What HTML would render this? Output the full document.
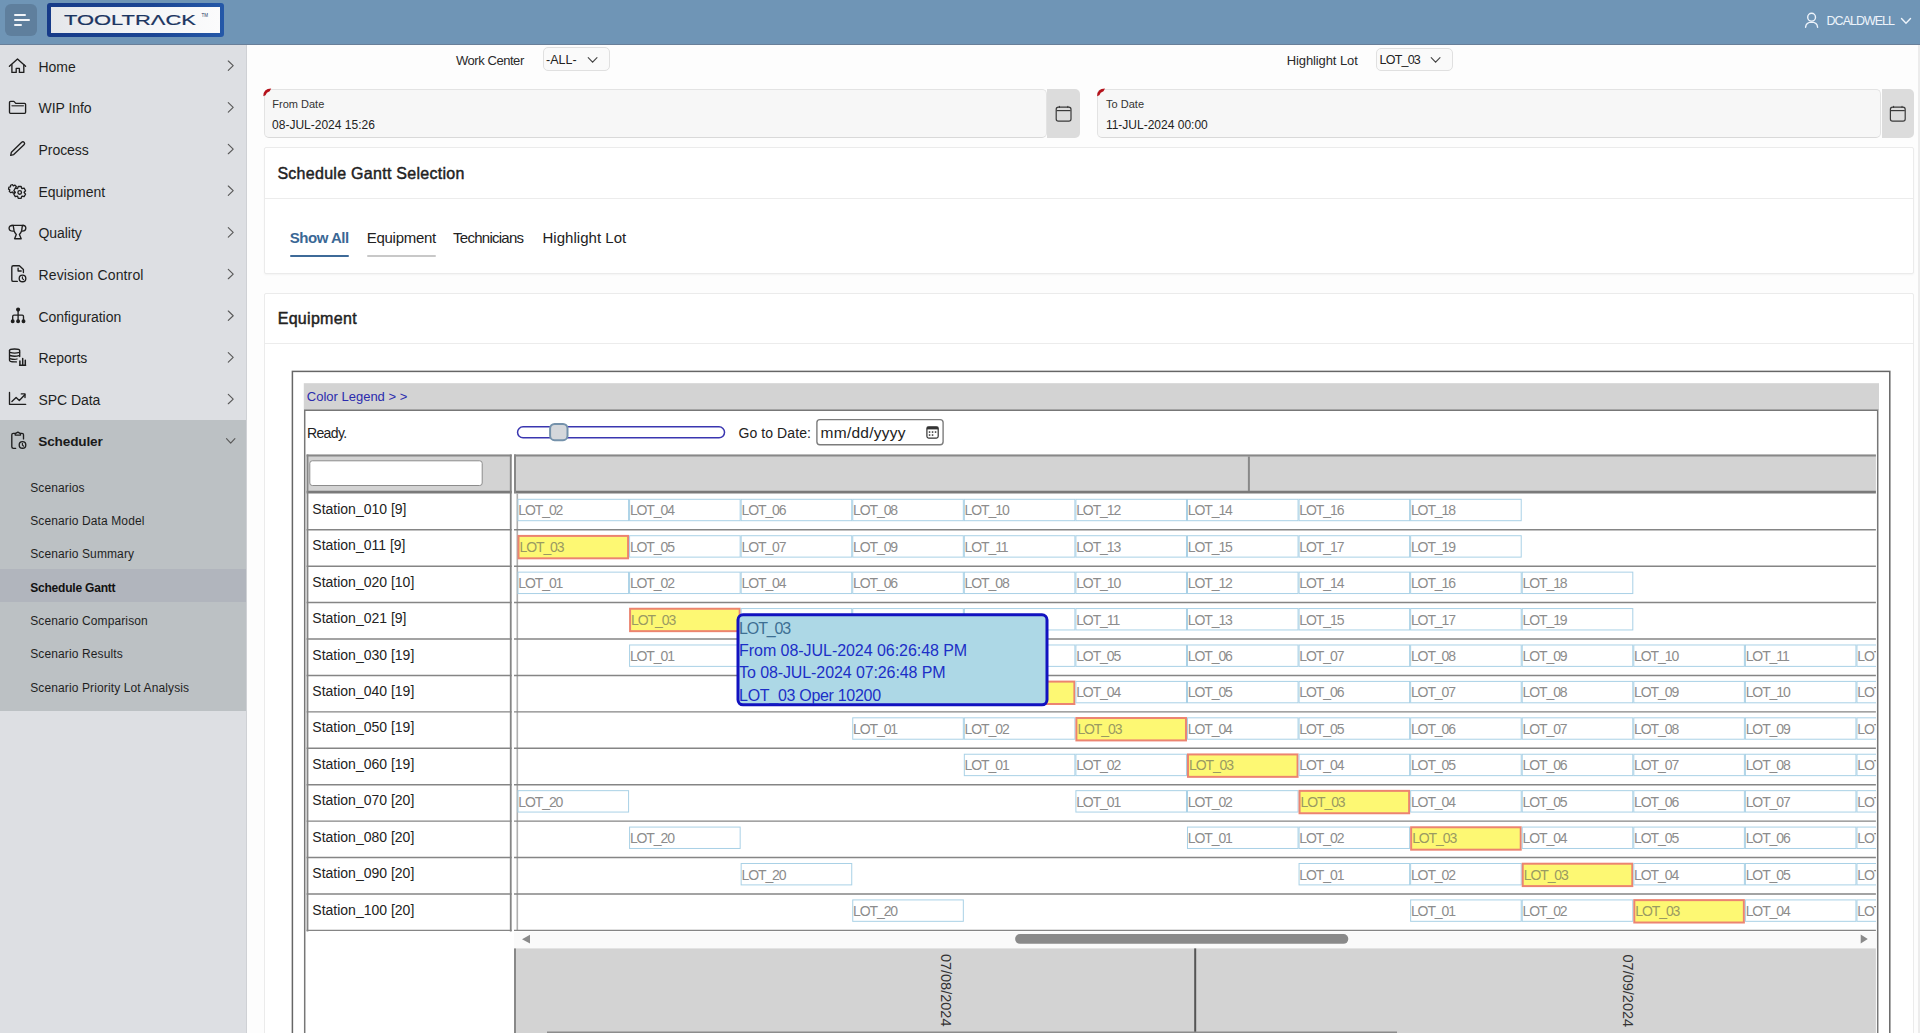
<!DOCTYPE html><html><head><meta charset="utf-8"><style>
*{box-sizing:border-box;margin:0;padding:0}
html,body{width:1920px;height:1033px;overflow:hidden;background:#fdfdfd;font-family:"Liberation Sans",sans-serif;color:#222}
.a{position:absolute;white-space:nowrap}
svg{position:absolute;overflow:visible}
</style></head><body>
<div class="a" style="left:0px;top:0px;width:1920px;height:45px;background:#6f95b6"></div>
<div class="a" style="left:0px;top:44px;width:1920px;height:1px;background:#687f99"></div>
<div class="a" style="left:5.2px;top:3.6px;width:32.3px;height:32px;background:#5f7f9d;border-radius:6px"></div>
<div class="a" style="left:13.5px;top:14.2px;width:12.2px;height:1.7px;background:#f2f5f9;border-radius:1px"></div>
<div class="a" style="left:13.5px;top:19.2px;width:16.5px;height:1.7px;background:#f2f5f9;border-radius:1px"></div>
<div class="a" style="left:13.5px;top:24.2px;width:8.2px;height:1.7px;background:#f2f5f9;border-radius:1px"></div>
<div class="a" style="left:47px;top:3px;width:177px;height:34px;background:linear-gradient(90deg,#163a88,#1b4594 60%,#2458a8);border-radius:3px"></div>
<div class="a" style="left:51px;top:7px;width:169px;height:26px;background:linear-gradient(90deg,#e4e6ea,#f4f5f7 50%,#fbfbfc)"></div>
<div class="a " style="left:63.5px;top:12.84px;font-size:14.6px;line-height:14.6px;color:#1c3561;letter-spacing:0px;transform:scaleX(1.5);transform-origin:0 0;-webkit-text-stroke:0.2px #1c3561">TOOLTR&#923;CK</div>
<div class="a " style="left:201.5px;top:13.69px;font-size:4.5px;line-height:4.5px;color:#1c3561">TM</div>
<svg style="left:0;top:0" width="1920" height="44"><g fill="none" stroke="#eef4fb" stroke-width="1.4" stroke-linecap="round"><circle cx="1811.6" cy="17.2" r="3.9"/><path d="M1805.6 27.2 Q1806 22.2 1811.6 22.1 Q1817.2 22.2 1817.6 27.2"/><path d="M1901.5 18.4 L1906 23.2 L1910.5 18.4"/></g></svg><div class="a " style="left:1826.6px;top:14.82px;font-size:12.5px;line-height:12.5px;color:#eef4fb;letter-spacing:-1.0px">DCALDWELL</div>
<div class="a" style="left:0px;top:45px;width:247px;height:988px;background:#dddfe3"></div>
<div class="a" style="left:246px;top:45px;width:1px;height:988px;background:#cfd1d5"></div>
<div class="a" style="left:0px;top:420px;width:246px;height:290.6px;background:#bcc1c4"></div>
<div class="a" style="left:0px;top:569.4px;width:246px;height:32.4px;background:#b1b5bd"></div>
<div class="a " style="left:38.5px;top:59.55px;font-size:14px;line-height:14px;color:#1f1f1f;letter-spacing:-0.05px">Home</div>
<div class="a " style="left:38.5px;top:101.22px;font-size:14px;line-height:14px;color:#1f1f1f;letter-spacing:-0.05px">WIP Info</div>
<div class="a " style="left:38.5px;top:142.89px;font-size:14px;line-height:14px;color:#1f1f1f;letter-spacing:-0.05px">Process</div>
<div class="a " style="left:38.5px;top:184.56px;font-size:14px;line-height:14px;color:#1f1f1f;letter-spacing:-0.05px">Equipment</div>
<div class="a " style="left:38.5px;top:226.23px;font-size:14px;line-height:14px;color:#1f1f1f;letter-spacing:-0.05px">Quality</div>
<div class="a " style="left:38.5px;top:267.90px;font-size:14px;line-height:14px;color:#1f1f1f;letter-spacing:0.15px">Revision Control</div>
<div class="a " style="left:38.5px;top:309.57px;font-size:14px;line-height:14px;color:#1f1f1f;letter-spacing:-0.05px">Configuration</div>
<div class="a " style="left:38.5px;top:351.24px;font-size:14px;line-height:14px;color:#1f1f1f;letter-spacing:-0.05px">Reports</div>
<div class="a " style="left:38.5px;top:392.91px;font-size:14px;line-height:14px;color:#1f1f1f;letter-spacing:-0.05px">SPC Data</div>
<div class="a " style="left:38.3px;top:435.09px;font-size:13.6px;line-height:13.6px;color:#1a1a1a;font-weight:bold;letter-spacing:-0.15px">Scheduler</div>
<svg style="left:0;top:0" width="247" height="720"><g fill="none" stroke="#5a5a5a" stroke-width="1.15" stroke-linecap="round" stroke-linejoin="round"><path d="M228.3 61.00 L233.2 65.70 L228.3 70.40"/><path d="M228.3 102.67 L233.2 107.37 L228.3 112.07"/><path d="M228.3 144.34 L233.2 149.04 L228.3 153.74"/><path d="M228.3 186.01 L233.2 190.71 L228.3 195.41"/><path d="M228.3 227.68 L233.2 232.38 L228.3 237.08"/><path d="M228.3 269.35 L233.2 274.05 L228.3 278.75"/><path d="M228.3 311.02 L233.2 315.72 L228.3 320.42"/><path d="M228.3 352.69 L233.2 357.39 L228.3 362.09"/><path d="M228.3 394.36 L233.2 399.06 L228.3 403.76"/><path d="M226.5 438.7 L230.7 443.2 L234.9 438.7"/></g></svg><div class="a " style="left:30.2px;top:481.74px;font-size:12px;line-height:12px;color:#1f1f1f;letter-spacing:0.12px">Scenarios</div>
<div class="a " style="left:30.2px;top:515.07px;font-size:12px;line-height:12px;color:#1f1f1f;letter-spacing:0.12px">Scenario Data Model</div>
<div class="a " style="left:30.2px;top:548.40px;font-size:12px;line-height:12px;color:#1f1f1f;letter-spacing:0.12px">Scenario Summary</div>
<div class="a " style="left:30.2px;top:581.73px;font-size:12px;line-height:12px;color:#111;font-weight:bold;letter-spacing:-0.2px">Schedule Gantt</div>
<div class="a " style="left:30.2px;top:615.06px;font-size:12px;line-height:12px;color:#1f1f1f;letter-spacing:0.12px">Scenario Comparison</div>
<div class="a " style="left:30.2px;top:648.39px;font-size:12px;line-height:12px;color:#1f1f1f;letter-spacing:0.12px">Scenario Results</div>
<div class="a " style="left:30.2px;top:681.72px;font-size:12px;line-height:12px;color:#1f1f1f;letter-spacing:0.12px">Scenario Priority Lot Analysis</div>
<div class="a" style="left:1918px;top:45px;width:2px;height:988px;background:#ececec"></div>
<div class="a " style="left:456px;top:53.80px;font-size:13px;line-height:13px;color:#2a2a2a;letter-spacing:-0.45px">Work Center</div>
<div class="a" style="left:542.5px;top:47.3px;width:67px;height:24px;background:#fafafa;border:1px solid #e0e0e0;border-radius:5px"></div>
<div class="a " style="left:546px;top:54.32px;font-size:12.5px;line-height:12.5px;color:#222">-ALL-</div>
<div class="a " style="left:1286.7px;top:53.80px;font-size:13px;line-height:13px;color:#2a2a2a;letter-spacing:-0.1px">Highlight Lot</div>
<div class="a" style="left:1375.7px;top:47.5px;width:77px;height:23.6px;background:#fafafa;border:1px solid #e0e0e0;border-radius:5px"></div>
<div class="a " style="left:1379.6px;top:54.32px;font-size:12.5px;line-height:12.5px;color:#222;letter-spacing:-0.8px">LOT_03</div>
<svg style="left:0;top:0" width="1920" height="80"><g fill="none" stroke="#444" stroke-width="1.1" stroke-linecap="round"><path d="M588.2 57.6 L592.6 62.2 L597 57.6"/><path d="M1431.2 57.6 L1435.6 62.2 L1440 57.6"/></g></svg><div class="a" style="left:263.5px;top:88.8px;width:783px;height:49.5px;background:#f7f7f7;border:1px solid #e3e3e3;border-bottom-color:#d9d9d9;border-radius:5px"></div>
<div class="a" style="left:1047.3px;top:88.8px;width:32.6px;height:49.5px;background:#dcdcdc;border-radius:0 5px 5px 0"></div>
<svg style="left:0;top:0" width="1920" height="150"><g fill="none" stroke="#3a3a3a" stroke-width="1.2"><rect x="1056.2" y="107.2" width="14.8" height="14" rx="2.2"/><path d="M1056.6 110.6 H1070.6" /><path d="M1059.4 105.9 V108 M1067.8 105.9 V108" stroke-width="1"/></g><path d="M263.30 96.3 Q263.30 88.6 271.20 88.6 L269.70 91.3 Q266.30 92.4 265.50 95.3 Z" fill="#b5121b"/></svg><div class="a " style="left:272.3px;top:99.49px;font-size:11px;line-height:11px;color:#333">From Date</div>
<div class="a " style="left:272.1px;top:118.84px;font-size:12px;line-height:12px;color:#222">08-JUL-2024 15:26</div>
<div class="a" style="left:1097.3px;top:88.8px;width:783.4px;height:49.5px;background:#f7f7f7;border:1px solid #e3e3e3;border-bottom-color:#d9d9d9;border-radius:5px"></div>
<div class="a" style="left:1881.4999999999998px;top:88.8px;width:32.6px;height:49.5px;background:#dcdcdc;border-radius:0 5px 5px 0"></div>
<svg style="left:0;top:0" width="1920" height="150"><g fill="none" stroke="#3a3a3a" stroke-width="1.2"><rect x="1890.4" y="107.2" width="14.8" height="14" rx="2.2"/><path d="M1890.8 110.6 H1904.8" /><path d="M1893.6 105.9 V108 M1902.0 105.9 V108" stroke-width="1"/></g><path d="M1097.10 96.3 Q1097.10 88.6 1105.00 88.6 L1103.50 91.3 Q1100.10 92.4 1099.30 95.3 Z" fill="#b5121b"/></svg><div class="a " style="left:1106.1px;top:99.49px;font-size:11px;line-height:11px;color:#333">To Date</div>
<div class="a " style="left:1105.8999999999999px;top:118.84px;font-size:12px;line-height:12px;color:#222">11-JUL-2024 00:00</div>
<div class="a" style="left:264px;top:147.3px;width:1650px;height:127px;background:#fff;border:1px solid #ebebeb;border-radius:2px;box-shadow:0 1px 2px rgba(0,0,0,.04)"></div>
<div class="a" style="left:265px;top:198px;width:1648px;height:1px;background:#ececec"></div>
<div class="a " style="left:277.4px;top:165.96px;font-size:16px;line-height:16px;color:#222;-webkit-text-stroke:0.45px #222;letter-spacing:0.28px">Schedule Gantt Selection</div>
<div class="a " style="left:289.8px;top:229.70px;font-size:15px;line-height:15px;color:#3a6795;font-weight:bold;letter-spacing:-0.5px">Show All</div>
<div class="a" style="left:289.8px;top:254.6px;width:59.2px;height:2.6px;background:#3e6a98;border-radius:1px"></div>
<div class="a " style="left:366.7px;top:229.70px;font-size:15px;line-height:15px;color:#222;letter-spacing:-0.27px">Equipment</div>
<div class="a" style="left:366.7px;top:254.6px;width:69.3px;height:2.6px;background:#c8c8c8;border-radius:1px"></div>
<div class="a " style="left:453px;top:229.70px;font-size:15px;line-height:15px;color:#222;letter-spacing:-0.73px">Technicians</div>
<div class="a " style="left:542.5px;top:229.70px;font-size:15px;line-height:15px;color:#222;letter-spacing:0.03px">Highlight Lot</div>
<div class="a" style="left:263.7px;top:292.6px;width:1650.3px;height:760px;background:#fff;border:1px solid #ebebeb;border-radius:2px"></div>
<div class="a" style="left:264.7px;top:342.5px;width:1648px;height:1px;background:#ececec"></div>
<div class="a " style="left:277.7px;top:311.06px;font-size:16px;line-height:16px;color:#222;-webkit-text-stroke:0.45px #222;letter-spacing:0.3px">Equipment</div>
<svg style="left:0;top:0;font-family:'Liberation Sans',sans-serif" width="1920" height="1033"><rect x="292.4" y="371.4" width="1597.4" height="720" fill="#fff" stroke="#666" stroke-width="1.5"/><rect x="303.8" y="383.2" width="1575.2" height="26.8" fill="#d3d3d3"/><path d="M304.7 1040 V410.3 H1877.7 V1040" fill="none" stroke="#777" stroke-width="1.5"/><text x="306.8" y="400.9" font-size="13" fill="#2b2bae">Color Legend &gt; &gt;</text><text x="306.9" y="437.8" font-size="14" fill="#222" letter-spacing="-0.6">Ready.</text><rect x="517.55" y="426.85" width="207" height="11" rx="5.5" fill="#fff" stroke="#3a36b0" stroke-width="1.5"/><rect x="550.1" y="424" width="17.4" height="16.2" rx="4.5" fill="#d4d7db" stroke="#7592ab" stroke-width="2"/><text x="738.4" y="438" font-size="14" fill="#222" letter-spacing="0.1">Go to Date:</text><rect x="816.9" y="419.6" width="126.2" height="25.2" rx="3" fill="#fff" stroke="#7c7c7c" stroke-width="1.4"/><text x="820.6" y="437.9" font-size="15.5" fill="#222" letter-spacing="0.25">mm/dd/yyyy</text><rect x="926.9" y="426.8" width="11.3" height="11.3" rx="1.8" fill="none" stroke="#333" stroke-width="1.2"/><rect x="926.9" y="426.8" width="11.3" height="2.6" fill="#333"/><rect x="928.8" y="431.3" width="1.5" height="1.5" fill="#333"/><rect x="931.8" y="431.3" width="1.5" height="1.5" fill="#333"/><rect x="934.8" y="431.3" width="1.5" height="1.5" fill="#333"/><rect x="928.8" y="434.3" width="1.5" height="1.5" fill="#333"/><rect x="931.8" y="434.3" width="1.5" height="1.5" fill="#333"/><rect x="306.6" y="454.6" width="205.1" height="38" fill="#d3d3d3"/><rect x="309.8" y="460.8" width="172.4" height="24.7" rx="2.5" fill="#fff" stroke="#8c8c8c" stroke-width="1"/><rect x="514" y="454.6" width="1361.9" height="38" fill="#d3d3d3"/><path d="M306.6 455.6 H511.7 M514 455.6 H1875.9" stroke="#888" stroke-width="2"/><path d="M306.6 492.15 H511.7 M514 492.15 H1875.9" stroke="#7a7a7a" stroke-width="2.7"/><path d="M1248.9 456.5 V491" stroke="#888" stroke-width="2"/><path d="M515 454.6 V493" stroke="#888" stroke-width="2"/><path d="M517.3 493.5 V931" stroke="#b0b0b0" stroke-width="1.6"/><path d="M307.5 454.6 V931.6 M510.75 454.6 V931.6" stroke="#858585" stroke-width="1.8"/><path d="M306.6 529.75 H511.7 M514 529.75 H1875.9" stroke="#858585" stroke-width="1.45"/><path d="M306.6 566.17 H511.7 M514 566.17 H1875.9" stroke="#858585" stroke-width="1.45"/><path d="M306.6 602.59 H511.7 M514 602.59 H1875.9" stroke="#858585" stroke-width="1.45"/><path d="M306.6 639.01 H511.7 M514 639.01 H1875.9" stroke="#858585" stroke-width="1.45"/><path d="M306.6 675.43 H511.7 M514 675.43 H1875.9" stroke="#858585" stroke-width="1.45"/><path d="M306.6 711.85 H511.7 M514 711.85 H1875.9" stroke="#858585" stroke-width="1.45"/><path d="M306.6 748.27 H511.7 M514 748.27 H1875.9" stroke="#858585" stroke-width="1.45"/><path d="M306.6 784.69 H511.7 M514 784.69 H1875.9" stroke="#858585" stroke-width="1.45"/><path d="M306.6 821.11 H511.7 M514 821.11 H1875.9" stroke="#858585" stroke-width="1.45"/><path d="M306.6 857.53 H511.7 M514 857.53 H1875.9" stroke="#858585" stroke-width="1.45"/><path d="M306.6 893.95 H511.7 M514 893.95 H1875.9" stroke="#858585" stroke-width="1.45"/><path d="M306.6 930.37 H511.7 M514 930.37 H1875.9" stroke="#858585" stroke-width="1.45"/><text x="312.3" y="513.90" font-size="14" fill="#222">Station_010 [9]</text><text x="312.3" y="550.32" font-size="14" fill="#222">Station_011 [9]</text><text x="312.3" y="586.74" font-size="14" fill="#222">Station_020 [10]</text><text x="312.3" y="623.16" font-size="14" fill="#222">Station_021 [9]</text><text x="312.3" y="659.58" font-size="14" fill="#222">Station_030 [19]</text><text x="312.3" y="696.00" font-size="14" fill="#222">Station_040 [19]</text><text x="312.3" y="732.42" font-size="14" fill="#222">Station_050 [19]</text><text x="312.3" y="768.84" font-size="14" fill="#222">Station_060 [19]</text><text x="312.3" y="805.26" font-size="14" fill="#222">Station_070 [20]</text><text x="312.3" y="841.68" font-size="14" fill="#222">Station_080 [20]</text><text x="312.3" y="878.10" font-size="14" fill="#222">Station_090 [20]</text><text x="312.3" y="914.52" font-size="14" fill="#222">Station_100 [20]</text><defs><clipPath id="cp"><rect x="514" y="454" width="1361.9" height="478"/></clipPath></defs><g clip-path="url(#cp)"><rect x="518.00" y="499.30" width="110.58" height="21.4" fill="#fff" stroke="#a9d1e6" stroke-width="1"/><text x="518.30" y="515.30" font-size="14" fill="#8c8c8c" letter-spacing="-1.1">LOT_02</text><rect x="629.58" y="499.30" width="110.58" height="21.4" fill="#fff" stroke="#a9d1e6" stroke-width="1"/><text x="629.88" y="515.30" font-size="14" fill="#8c8c8c" letter-spacing="-1.1">LOT_04</text><rect x="741.16" y="499.30" width="110.58" height="21.4" fill="#fff" stroke="#a9d1e6" stroke-width="1"/><text x="741.46" y="515.30" font-size="14" fill="#8c8c8c" letter-spacing="-1.1">LOT_06</text><rect x="852.74" y="499.30" width="110.58" height="21.4" fill="#fff" stroke="#a9d1e6" stroke-width="1"/><text x="853.04" y="515.30" font-size="14" fill="#8c8c8c" letter-spacing="-1.1">LOT_08</text><rect x="964.32" y="499.30" width="110.58" height="21.4" fill="#fff" stroke="#a9d1e6" stroke-width="1"/><text x="964.62" y="515.30" font-size="14" fill="#8c8c8c" letter-spacing="-1.1">LOT_10</text><rect x="1075.90" y="499.30" width="110.58" height="21.4" fill="#fff" stroke="#a9d1e6" stroke-width="1"/><text x="1076.20" y="515.30" font-size="14" fill="#8c8c8c" letter-spacing="-1.1">LOT_12</text><rect x="1187.48" y="499.30" width="110.58" height="21.4" fill="#fff" stroke="#a9d1e6" stroke-width="1"/><text x="1187.78" y="515.30" font-size="14" fill="#8c8c8c" letter-spacing="-1.1">LOT_14</text><rect x="1299.06" y="499.30" width="110.58" height="21.4" fill="#fff" stroke="#a9d1e6" stroke-width="1"/><text x="1299.36" y="515.30" font-size="14" fill="#8c8c8c" letter-spacing="-1.1">LOT_16</text><rect x="1410.64" y="499.30" width="110.58" height="21.4" fill="#fff" stroke="#a9d1e6" stroke-width="1"/><text x="1410.94" y="515.30" font-size="14" fill="#8c8c8c" letter-spacing="-1.1">LOT_18</text><rect x="518.50" y="535.92" width="109.58" height="22.4" fill="#fdf873" stroke="#ec8470" stroke-width="2"/><text x="519.50" y="551.72" font-size="14" fill="#9a9a62" letter-spacing="-1.1">LOT_03</text><rect x="629.58" y="535.72" width="110.58" height="21.4" fill="#fff" stroke="#a9d1e6" stroke-width="1"/><text x="629.88" y="551.72" font-size="14" fill="#8c8c8c" letter-spacing="-1.1">LOT_05</text><rect x="741.16" y="535.72" width="110.58" height="21.4" fill="#fff" stroke="#a9d1e6" stroke-width="1"/><text x="741.46" y="551.72" font-size="14" fill="#8c8c8c" letter-spacing="-1.1">LOT_07</text><rect x="852.74" y="535.72" width="110.58" height="21.4" fill="#fff" stroke="#a9d1e6" stroke-width="1"/><text x="853.04" y="551.72" font-size="14" fill="#8c8c8c" letter-spacing="-1.1">LOT_09</text><rect x="964.32" y="535.72" width="110.58" height="21.4" fill="#fff" stroke="#a9d1e6" stroke-width="1"/><text x="964.62" y="551.72" font-size="14" fill="#8c8c8c" letter-spacing="-1.1">LOT_11</text><rect x="1075.90" y="535.72" width="110.58" height="21.4" fill="#fff" stroke="#a9d1e6" stroke-width="1"/><text x="1076.20" y="551.72" font-size="14" fill="#8c8c8c" letter-spacing="-1.1">LOT_13</text><rect x="1187.48" y="535.72" width="110.58" height="21.4" fill="#fff" stroke="#a9d1e6" stroke-width="1"/><text x="1187.78" y="551.72" font-size="14" fill="#8c8c8c" letter-spacing="-1.1">LOT_15</text><rect x="1299.06" y="535.72" width="110.58" height="21.4" fill="#fff" stroke="#a9d1e6" stroke-width="1"/><text x="1299.36" y="551.72" font-size="14" fill="#8c8c8c" letter-spacing="-1.1">LOT_17</text><rect x="1410.64" y="535.72" width="110.58" height="21.4" fill="#fff" stroke="#a9d1e6" stroke-width="1"/><text x="1410.94" y="551.72" font-size="14" fill="#8c8c8c" letter-spacing="-1.1">LOT_19</text><rect x="518.00" y="572.14" width="110.58" height="21.4" fill="#fff" stroke="#a9d1e6" stroke-width="1"/><text x="518.30" y="588.14" font-size="14" fill="#8c8c8c" letter-spacing="-1.1">LOT_01</text><rect x="629.58" y="572.14" width="110.58" height="21.4" fill="#fff" stroke="#a9d1e6" stroke-width="1"/><text x="629.88" y="588.14" font-size="14" fill="#8c8c8c" letter-spacing="-1.1">LOT_02</text><rect x="741.16" y="572.14" width="110.58" height="21.4" fill="#fff" stroke="#a9d1e6" stroke-width="1"/><text x="741.46" y="588.14" font-size="14" fill="#8c8c8c" letter-spacing="-1.1">LOT_04</text><rect x="852.74" y="572.14" width="110.58" height="21.4" fill="#fff" stroke="#a9d1e6" stroke-width="1"/><text x="853.04" y="588.14" font-size="14" fill="#8c8c8c" letter-spacing="-1.1">LOT_06</text><rect x="964.32" y="572.14" width="110.58" height="21.4" fill="#fff" stroke="#a9d1e6" stroke-width="1"/><text x="964.62" y="588.14" font-size="14" fill="#8c8c8c" letter-spacing="-1.1">LOT_08</text><rect x="1075.90" y="572.14" width="110.58" height="21.4" fill="#fff" stroke="#a9d1e6" stroke-width="1"/><text x="1076.20" y="588.14" font-size="14" fill="#8c8c8c" letter-spacing="-1.1">LOT_10</text><rect x="1187.48" y="572.14" width="110.58" height="21.4" fill="#fff" stroke="#a9d1e6" stroke-width="1"/><text x="1187.78" y="588.14" font-size="14" fill="#8c8c8c" letter-spacing="-1.1">LOT_12</text><rect x="1299.06" y="572.14" width="110.58" height="21.4" fill="#fff" stroke="#a9d1e6" stroke-width="1"/><text x="1299.36" y="588.14" font-size="14" fill="#8c8c8c" letter-spacing="-1.1">LOT_14</text><rect x="1410.64" y="572.14" width="110.58" height="21.4" fill="#fff" stroke="#a9d1e6" stroke-width="1"/><text x="1410.94" y="588.14" font-size="14" fill="#8c8c8c" letter-spacing="-1.1">LOT_16</text><rect x="1522.22" y="572.14" width="110.58" height="21.4" fill="#fff" stroke="#a9d1e6" stroke-width="1"/><text x="1522.52" y="588.14" font-size="14" fill="#8c8c8c" letter-spacing="-1.1">LOT_18</text><rect x="630.08" y="608.76" width="109.58" height="22.4" fill="#fdf873" stroke="#ec8470" stroke-width="2"/><text x="631.08" y="624.56" font-size="14" fill="#9a9a62" letter-spacing="-1.1">LOT_03</text><rect x="741.16" y="608.56" width="110.58" height="21.4" fill="#fff" stroke="#a9d1e6" stroke-width="1"/><text x="741.46" y="624.56" font-size="14" fill="#8c8c8c" letter-spacing="-1.1">LOT_05</text><rect x="852.74" y="608.56" width="110.58" height="21.4" fill="#fff" stroke="#a9d1e6" stroke-width="1"/><text x="853.04" y="624.56" font-size="14" fill="#8c8c8c" letter-spacing="-1.1">LOT_07</text><rect x="964.32" y="608.56" width="110.58" height="21.4" fill="#fff" stroke="#a9d1e6" stroke-width="1"/><text x="964.62" y="624.56" font-size="14" fill="#8c8c8c" letter-spacing="-1.1">LOT_09</text><rect x="1075.90" y="608.56" width="110.58" height="21.4" fill="#fff" stroke="#a9d1e6" stroke-width="1"/><text x="1076.20" y="624.56" font-size="14" fill="#8c8c8c" letter-spacing="-1.1">LOT_11</text><rect x="1187.48" y="608.56" width="110.58" height="21.4" fill="#fff" stroke="#a9d1e6" stroke-width="1"/><text x="1187.78" y="624.56" font-size="14" fill="#8c8c8c" letter-spacing="-1.1">LOT_13</text><rect x="1299.06" y="608.56" width="110.58" height="21.4" fill="#fff" stroke="#a9d1e6" stroke-width="1"/><text x="1299.36" y="624.56" font-size="14" fill="#8c8c8c" letter-spacing="-1.1">LOT_15</text><rect x="1410.64" y="608.56" width="110.58" height="21.4" fill="#fff" stroke="#a9d1e6" stroke-width="1"/><text x="1410.94" y="624.56" font-size="14" fill="#8c8c8c" letter-spacing="-1.1">LOT_17</text><rect x="1522.22" y="608.56" width="110.58" height="21.4" fill="#fff" stroke="#a9d1e6" stroke-width="1"/><text x="1522.52" y="624.56" font-size="14" fill="#8c8c8c" letter-spacing="-1.1">LOT_19</text><rect x="629.58" y="644.98" width="110.58" height="21.4" fill="#fff" stroke="#a9d1e6" stroke-width="1"/><text x="629.88" y="660.98" font-size="14" fill="#8c8c8c" letter-spacing="-1.1">LOT_01</text><rect x="741.16" y="644.98" width="110.58" height="21.4" fill="#fff" stroke="#a9d1e6" stroke-width="1"/><text x="741.46" y="660.98" font-size="14" fill="#8c8c8c" letter-spacing="-1.1">LOT_02</text><rect x="853.24" y="645.18" width="109.58" height="22.4" fill="#fdf873" stroke="#ec8470" stroke-width="2"/><text x="854.24" y="660.98" font-size="14" fill="#9a9a62" letter-spacing="-1.1">LOT_03</text><rect x="964.32" y="644.98" width="110.58" height="21.4" fill="#fff" stroke="#a9d1e6" stroke-width="1"/><text x="964.62" y="660.98" font-size="14" fill="#8c8c8c" letter-spacing="-1.1">LOT_04</text><rect x="1075.90" y="644.98" width="110.58" height="21.4" fill="#fff" stroke="#a9d1e6" stroke-width="1"/><text x="1076.20" y="660.98" font-size="14" fill="#8c8c8c" letter-spacing="-1.1">LOT_05</text><rect x="1187.48" y="644.98" width="110.58" height="21.4" fill="#fff" stroke="#a9d1e6" stroke-width="1"/><text x="1187.78" y="660.98" font-size="14" fill="#8c8c8c" letter-spacing="-1.1">LOT_06</text><rect x="1299.06" y="644.98" width="110.58" height="21.4" fill="#fff" stroke="#a9d1e6" stroke-width="1"/><text x="1299.36" y="660.98" font-size="14" fill="#8c8c8c" letter-spacing="-1.1">LOT_07</text><rect x="1410.64" y="644.98" width="110.58" height="21.4" fill="#fff" stroke="#a9d1e6" stroke-width="1"/><text x="1410.94" y="660.98" font-size="14" fill="#8c8c8c" letter-spacing="-1.1">LOT_08</text><rect x="1522.22" y="644.98" width="110.58" height="21.4" fill="#fff" stroke="#a9d1e6" stroke-width="1"/><text x="1522.52" y="660.98" font-size="14" fill="#8c8c8c" letter-spacing="-1.1">LOT_09</text><rect x="1633.80" y="644.98" width="110.58" height="21.4" fill="#fff" stroke="#a9d1e6" stroke-width="1"/><text x="1634.10" y="660.98" font-size="14" fill="#8c8c8c" letter-spacing="-1.1">LOT_10</text><rect x="1745.38" y="644.98" width="110.58" height="21.4" fill="#fff" stroke="#a9d1e6" stroke-width="1"/><text x="1745.68" y="660.98" font-size="14" fill="#8c8c8c" letter-spacing="-1.1">LOT_11</text><rect x="1856.96" y="644.98" width="110.58" height="21.4" fill="#fff" stroke="#a9d1e6" stroke-width="1"/><text x="1857.26" y="660.98" font-size="14" fill="#8c8c8c" letter-spacing="-1.1">LOT_12</text><rect x="741.16" y="681.40" width="110.58" height="21.4" fill="#fff" stroke="#a9d1e6" stroke-width="1"/><text x="741.46" y="697.40" font-size="14" fill="#8c8c8c" letter-spacing="-1.1">LOT_01</text><rect x="852.74" y="681.40" width="110.58" height="21.4" fill="#fff" stroke="#a9d1e6" stroke-width="1"/><text x="853.04" y="697.40" font-size="14" fill="#8c8c8c" letter-spacing="-1.1">LOT_02</text><rect x="964.82" y="681.60" width="109.58" height="22.4" fill="#fdf873" stroke="#ec8470" stroke-width="2"/><text x="965.82" y="697.40" font-size="14" fill="#9a9a62" letter-spacing="-1.1">LOT_03</text><rect x="1075.90" y="681.40" width="110.58" height="21.4" fill="#fff" stroke="#a9d1e6" stroke-width="1"/><text x="1076.20" y="697.40" font-size="14" fill="#8c8c8c" letter-spacing="-1.1">LOT_04</text><rect x="1187.48" y="681.40" width="110.58" height="21.4" fill="#fff" stroke="#a9d1e6" stroke-width="1"/><text x="1187.78" y="697.40" font-size="14" fill="#8c8c8c" letter-spacing="-1.1">LOT_05</text><rect x="1299.06" y="681.40" width="110.58" height="21.4" fill="#fff" stroke="#a9d1e6" stroke-width="1"/><text x="1299.36" y="697.40" font-size="14" fill="#8c8c8c" letter-spacing="-1.1">LOT_06</text><rect x="1410.64" y="681.40" width="110.58" height="21.4" fill="#fff" stroke="#a9d1e6" stroke-width="1"/><text x="1410.94" y="697.40" font-size="14" fill="#8c8c8c" letter-spacing="-1.1">LOT_07</text><rect x="1522.22" y="681.40" width="110.58" height="21.4" fill="#fff" stroke="#a9d1e6" stroke-width="1"/><text x="1522.52" y="697.40" font-size="14" fill="#8c8c8c" letter-spacing="-1.1">LOT_08</text><rect x="1633.80" y="681.40" width="110.58" height="21.4" fill="#fff" stroke="#a9d1e6" stroke-width="1"/><text x="1634.10" y="697.40" font-size="14" fill="#8c8c8c" letter-spacing="-1.1">LOT_09</text><rect x="1745.38" y="681.40" width="110.58" height="21.4" fill="#fff" stroke="#a9d1e6" stroke-width="1"/><text x="1745.68" y="697.40" font-size="14" fill="#8c8c8c" letter-spacing="-1.1">LOT_10</text><rect x="1856.96" y="681.40" width="110.58" height="21.4" fill="#fff" stroke="#a9d1e6" stroke-width="1"/><text x="1857.26" y="697.40" font-size="14" fill="#8c8c8c" letter-spacing="-1.1">LOT_11</text><rect x="852.74" y="717.82" width="110.58" height="21.4" fill="#fff" stroke="#a9d1e6" stroke-width="1"/><text x="853.04" y="733.82" font-size="14" fill="#8c8c8c" letter-spacing="-1.1">LOT_01</text><rect x="964.32" y="717.82" width="110.58" height="21.4" fill="#fff" stroke="#a9d1e6" stroke-width="1"/><text x="964.62" y="733.82" font-size="14" fill="#8c8c8c" letter-spacing="-1.1">LOT_02</text><rect x="1076.40" y="718.02" width="109.58" height="22.4" fill="#fdf873" stroke="#ec8470" stroke-width="2"/><text x="1077.40" y="733.82" font-size="14" fill="#9a9a62" letter-spacing="-1.1">LOT_03</text><rect x="1187.48" y="717.82" width="110.58" height="21.4" fill="#fff" stroke="#a9d1e6" stroke-width="1"/><text x="1187.78" y="733.82" font-size="14" fill="#8c8c8c" letter-spacing="-1.1">LOT_04</text><rect x="1299.06" y="717.82" width="110.58" height="21.4" fill="#fff" stroke="#a9d1e6" stroke-width="1"/><text x="1299.36" y="733.82" font-size="14" fill="#8c8c8c" letter-spacing="-1.1">LOT_05</text><rect x="1410.64" y="717.82" width="110.58" height="21.4" fill="#fff" stroke="#a9d1e6" stroke-width="1"/><text x="1410.94" y="733.82" font-size="14" fill="#8c8c8c" letter-spacing="-1.1">LOT_06</text><rect x="1522.22" y="717.82" width="110.58" height="21.4" fill="#fff" stroke="#a9d1e6" stroke-width="1"/><text x="1522.52" y="733.82" font-size="14" fill="#8c8c8c" letter-spacing="-1.1">LOT_07</text><rect x="1633.80" y="717.82" width="110.58" height="21.4" fill="#fff" stroke="#a9d1e6" stroke-width="1"/><text x="1634.10" y="733.82" font-size="14" fill="#8c8c8c" letter-spacing="-1.1">LOT_08</text><rect x="1745.38" y="717.82" width="110.58" height="21.4" fill="#fff" stroke="#a9d1e6" stroke-width="1"/><text x="1745.68" y="733.82" font-size="14" fill="#8c8c8c" letter-spacing="-1.1">LOT_09</text><rect x="1856.96" y="717.82" width="110.58" height="21.4" fill="#fff" stroke="#a9d1e6" stroke-width="1"/><text x="1857.26" y="733.82" font-size="14" fill="#8c8c8c" letter-spacing="-1.1">LOT_10</text><rect x="964.32" y="754.24" width="110.58" height="21.4" fill="#fff" stroke="#a9d1e6" stroke-width="1"/><text x="964.62" y="770.24" font-size="14" fill="#8c8c8c" letter-spacing="-1.1">LOT_01</text><rect x="1075.90" y="754.24" width="110.58" height="21.4" fill="#fff" stroke="#a9d1e6" stroke-width="1"/><text x="1076.20" y="770.24" font-size="14" fill="#8c8c8c" letter-spacing="-1.1">LOT_02</text><rect x="1187.98" y="754.44" width="109.58" height="22.4" fill="#fdf873" stroke="#ec8470" stroke-width="2"/><text x="1188.98" y="770.24" font-size="14" fill="#9a9a62" letter-spacing="-1.1">LOT_03</text><rect x="1299.06" y="754.24" width="110.58" height="21.4" fill="#fff" stroke="#a9d1e6" stroke-width="1"/><text x="1299.36" y="770.24" font-size="14" fill="#8c8c8c" letter-spacing="-1.1">LOT_04</text><rect x="1410.64" y="754.24" width="110.58" height="21.4" fill="#fff" stroke="#a9d1e6" stroke-width="1"/><text x="1410.94" y="770.24" font-size="14" fill="#8c8c8c" letter-spacing="-1.1">LOT_05</text><rect x="1522.22" y="754.24" width="110.58" height="21.4" fill="#fff" stroke="#a9d1e6" stroke-width="1"/><text x="1522.52" y="770.24" font-size="14" fill="#8c8c8c" letter-spacing="-1.1">LOT_06</text><rect x="1633.80" y="754.24" width="110.58" height="21.4" fill="#fff" stroke="#a9d1e6" stroke-width="1"/><text x="1634.10" y="770.24" font-size="14" fill="#8c8c8c" letter-spacing="-1.1">LOT_07</text><rect x="1745.38" y="754.24" width="110.58" height="21.4" fill="#fff" stroke="#a9d1e6" stroke-width="1"/><text x="1745.68" y="770.24" font-size="14" fill="#8c8c8c" letter-spacing="-1.1">LOT_08</text><rect x="1856.96" y="754.24" width="110.58" height="21.4" fill="#fff" stroke="#a9d1e6" stroke-width="1"/><text x="1857.26" y="770.24" font-size="14" fill="#8c8c8c" letter-spacing="-1.1">LOT_09</text><rect x="518.00" y="790.66" width="110.58" height="21.4" fill="#fff" stroke="#a9d1e6" stroke-width="1"/><text x="518.30" y="806.66" font-size="14" fill="#8c8c8c" letter-spacing="-1.1">LOT_20</text><rect x="1075.90" y="790.66" width="110.58" height="21.4" fill="#fff" stroke="#a9d1e6" stroke-width="1"/><text x="1076.20" y="806.66" font-size="14" fill="#8c8c8c" letter-spacing="-1.1">LOT_01</text><rect x="1187.48" y="790.66" width="110.58" height="21.4" fill="#fff" stroke="#a9d1e6" stroke-width="1"/><text x="1187.78" y="806.66" font-size="14" fill="#8c8c8c" letter-spacing="-1.1">LOT_02</text><rect x="1299.56" y="790.86" width="109.58" height="22.4" fill="#fdf873" stroke="#ec8470" stroke-width="2"/><text x="1300.56" y="806.66" font-size="14" fill="#9a9a62" letter-spacing="-1.1">LOT_03</text><rect x="1410.64" y="790.66" width="110.58" height="21.4" fill="#fff" stroke="#a9d1e6" stroke-width="1"/><text x="1410.94" y="806.66" font-size="14" fill="#8c8c8c" letter-spacing="-1.1">LOT_04</text><rect x="1522.22" y="790.66" width="110.58" height="21.4" fill="#fff" stroke="#a9d1e6" stroke-width="1"/><text x="1522.52" y="806.66" font-size="14" fill="#8c8c8c" letter-spacing="-1.1">LOT_05</text><rect x="1633.80" y="790.66" width="110.58" height="21.4" fill="#fff" stroke="#a9d1e6" stroke-width="1"/><text x="1634.10" y="806.66" font-size="14" fill="#8c8c8c" letter-spacing="-1.1">LOT_06</text><rect x="1745.38" y="790.66" width="110.58" height="21.4" fill="#fff" stroke="#a9d1e6" stroke-width="1"/><text x="1745.68" y="806.66" font-size="14" fill="#8c8c8c" letter-spacing="-1.1">LOT_07</text><rect x="1856.96" y="790.66" width="110.58" height="21.4" fill="#fff" stroke="#a9d1e6" stroke-width="1"/><text x="1857.26" y="806.66" font-size="14" fill="#8c8c8c" letter-spacing="-1.1">LOT_08</text><rect x="629.58" y="827.08" width="110.58" height="21.4" fill="#fff" stroke="#a9d1e6" stroke-width="1"/><text x="629.88" y="843.08" font-size="14" fill="#8c8c8c" letter-spacing="-1.1">LOT_20</text><rect x="1187.48" y="827.08" width="110.58" height="21.4" fill="#fff" stroke="#a9d1e6" stroke-width="1"/><text x="1187.78" y="843.08" font-size="14" fill="#8c8c8c" letter-spacing="-1.1">LOT_01</text><rect x="1299.06" y="827.08" width="110.58" height="21.4" fill="#fff" stroke="#a9d1e6" stroke-width="1"/><text x="1299.36" y="843.08" font-size="14" fill="#8c8c8c" letter-spacing="-1.1">LOT_02</text><rect x="1411.14" y="827.28" width="109.58" height="22.4" fill="#fdf873" stroke="#ec8470" stroke-width="2"/><text x="1412.14" y="843.08" font-size="14" fill="#9a9a62" letter-spacing="-1.1">LOT_03</text><rect x="1522.22" y="827.08" width="110.58" height="21.4" fill="#fff" stroke="#a9d1e6" stroke-width="1"/><text x="1522.52" y="843.08" font-size="14" fill="#8c8c8c" letter-spacing="-1.1">LOT_04</text><rect x="1633.80" y="827.08" width="110.58" height="21.4" fill="#fff" stroke="#a9d1e6" stroke-width="1"/><text x="1634.10" y="843.08" font-size="14" fill="#8c8c8c" letter-spacing="-1.1">LOT_05</text><rect x="1745.38" y="827.08" width="110.58" height="21.4" fill="#fff" stroke="#a9d1e6" stroke-width="1"/><text x="1745.68" y="843.08" font-size="14" fill="#8c8c8c" letter-spacing="-1.1">LOT_06</text><rect x="1856.96" y="827.08" width="110.58" height="21.4" fill="#fff" stroke="#a9d1e6" stroke-width="1"/><text x="1857.26" y="843.08" font-size="14" fill="#8c8c8c" letter-spacing="-1.1">LOT_07</text><rect x="741.16" y="863.50" width="110.58" height="21.4" fill="#fff" stroke="#a9d1e6" stroke-width="1"/><text x="741.46" y="879.50" font-size="14" fill="#8c8c8c" letter-spacing="-1.1">LOT_20</text><rect x="1299.06" y="863.50" width="110.58" height="21.4" fill="#fff" stroke="#a9d1e6" stroke-width="1"/><text x="1299.36" y="879.50" font-size="14" fill="#8c8c8c" letter-spacing="-1.1">LOT_01</text><rect x="1410.64" y="863.50" width="110.58" height="21.4" fill="#fff" stroke="#a9d1e6" stroke-width="1"/><text x="1410.94" y="879.50" font-size="14" fill="#8c8c8c" letter-spacing="-1.1">LOT_02</text><rect x="1522.72" y="863.70" width="109.58" height="22.4" fill="#fdf873" stroke="#ec8470" stroke-width="2"/><text x="1523.72" y="879.50" font-size="14" fill="#9a9a62" letter-spacing="-1.1">LOT_03</text><rect x="1633.80" y="863.50" width="110.58" height="21.4" fill="#fff" stroke="#a9d1e6" stroke-width="1"/><text x="1634.10" y="879.50" font-size="14" fill="#8c8c8c" letter-spacing="-1.1">LOT_04</text><rect x="1745.38" y="863.50" width="110.58" height="21.4" fill="#fff" stroke="#a9d1e6" stroke-width="1"/><text x="1745.68" y="879.50" font-size="14" fill="#8c8c8c" letter-spacing="-1.1">LOT_05</text><rect x="1856.96" y="863.50" width="110.58" height="21.4" fill="#fff" stroke="#a9d1e6" stroke-width="1"/><text x="1857.26" y="879.50" font-size="14" fill="#8c8c8c" letter-spacing="-1.1">LOT_06</text><rect x="852.74" y="899.92" width="110.58" height="21.4" fill="#fff" stroke="#a9d1e6" stroke-width="1"/><text x="853.04" y="915.92" font-size="14" fill="#8c8c8c" letter-spacing="-1.1">LOT_20</text><rect x="1410.64" y="899.92" width="110.58" height="21.4" fill="#fff" stroke="#a9d1e6" stroke-width="1"/><text x="1410.94" y="915.92" font-size="14" fill="#8c8c8c" letter-spacing="-1.1">LOT_01</text><rect x="1522.22" y="899.92" width="110.58" height="21.4" fill="#fff" stroke="#a9d1e6" stroke-width="1"/><text x="1522.52" y="915.92" font-size="14" fill="#8c8c8c" letter-spacing="-1.1">LOT_02</text><rect x="1634.30" y="900.12" width="109.58" height="22.4" fill="#fdf873" stroke="#ec8470" stroke-width="2"/><text x="1635.30" y="915.92" font-size="14" fill="#9a9a62" letter-spacing="-1.1">LOT_03</text><rect x="1745.38" y="899.92" width="110.58" height="21.4" fill="#fff" stroke="#a9d1e6" stroke-width="1"/><text x="1745.68" y="915.92" font-size="14" fill="#8c8c8c" letter-spacing="-1.1">LOT_04</text><rect x="1856.96" y="899.92" width="110.58" height="21.4" fill="#fff" stroke="#a9d1e6" stroke-width="1"/><text x="1857.26" y="915.92" font-size="14" fill="#8c8c8c" letter-spacing="-1.1">LOT_05</text></g><rect x="514" y="931.6" width="1361.9" height="16.8" fill="#fafafa"/><path d="M522 939.2 L530 934.8 V943.6 Z M1867.8 939 L1860.7 934.5 V943.4 Z" fill="#8a8a8a"/><rect x="1015.1" y="934.1" width="333.2" height="9.7" rx="4.85" fill="#8a8a8a"/><rect x="514" y="948.4" width="1361.9" height="90" fill="#d3d3d3"/><path d="M515 948.4 V1033" stroke="#888" stroke-width="2"/><path d="M1195.2 948.4 V1033" stroke="#555" stroke-width="2"/><path d="M547 1032.3 H1397" stroke="#8c8c8c" stroke-width="1.6"/><text transform="translate(941.3 953.9) rotate(90)" font-size="14.5" fill="#333">07/08/2024</text><text transform="translate(1622.6 954.5) rotate(90)" font-size="14.5" fill="#333">07/09/2024</text><rect x="738" y="614.8" width="309" height="90" rx="5" fill="#add8e6" stroke="#1212c0" stroke-width="3"/><text x="739.1" y="633.60" font-size="16" fill="#3d6f93" letter-spacing="-1.15">LOT_03</text><text x="739.1" y="655.90" font-size="16" fill="#1c2fc6" letter-spacing="-0.05">From 08-JUL-2024 06:26:48 PM</text><text x="739.1" y="678.20" font-size="16" fill="#1c2fc6" letter-spacing="-0.1">To 08-JUL-2024 07:26:48 PM</text><text x="739.1" y="700.50" font-size="16" fill="#1c2fc6" letter-spacing="-0.3">LOT_03 Oper 10200</text></svg>
<svg style="left:0;top:0" width="1920" height="1033" viewBox="0 0 1920 1033">
<g fill="none" stroke="#1e1e1e" stroke-width="1.35" stroke-linejoin="round" stroke-linecap="round">
 <!-- home -->
 <path d="M9.4 66.3 L17.5 58.9 L25.6 66.3"/>
 <path d="M11.9 64.6 V72.4 H16.2 V68.4 H19.4 V72.4 H23.8 V64.6"/>
 <!-- folder -->
 <path d="M9.5 102.4 Q9.5 101.4 10.5 101.4 H13.9 L15.8 103.4 H24.6 Q25.6 103.4 25.6 104.4 V112.3 Q25.6 113.3 24.6 113.3 H10.5 Q9.5 113.3 9.5 112.3 Z"/>
 <path d="M12 105.7 H23.4" stroke="#555"/>
 <!-- pencil -->
 <path d="M10.7 155.3 L11.4 152.2 L21.7 142.2 Q23 141.1 24.2 142.4 Q25.2 143.7 24 144.8 L13.7 154.6 Z"/>
 <!-- gear -->
 <path d="M15.76 187.99 L17.10 188.72 L16.69 190.74 L15.17 190.90 L15.07 191.01 L15.10 192.53 L13.15 193.19 L12.26 191.95 L12.11 191.92 L10.81 192.71 L9.26 191.35 L9.89 189.96 L9.84 189.81 L8.50 189.08 L8.91 187.06 L10.43 186.90 L10.53 186.79 L10.50 185.27 L12.45 184.61 L13.34 185.85 L13.49 185.88 L14.79 185.09 L16.34 186.45 L15.71 187.84 Z" stroke-width="1.25"/>
 <path d="M21.81 196.26 L21.16 198.32 L18.24 198.32 L17.59 196.26 L17.41 196.16 L15.30 196.63 L13.84 194.10 L15.30 192.51 L15.30 192.29 L13.84 190.70 L15.30 188.17 L17.41 188.64 L17.59 188.54 L18.24 186.48 L21.16 186.48 L21.81 188.54 L21.99 188.64 L24.10 188.17 L25.56 190.70 L24.10 192.29 L24.10 192.51 L25.56 194.10 L24.10 196.63 L21.99 196.16 Z" fill="#dddfe3" stroke-width="1.3"/>
 <circle cx="19.7" cy="192.4" r="1.8"/>
 <!-- trophy -->
 <path d="M11.6 225.4 H23.9"/>
 <path d="M13.2 225.4 L14 230.4 Q14.6 233 16.3 234.6 L14.6 238.7 H21.2 L19.4 234.6 Q21.1 233 21.7 230.4 L22.4 225.4"/>
 <path d="M12.4 225.5 Q8.9 225.6 9.1 228.5 Q9.4 231.3 13.6 231.1"/>
 <path d="M23.2 225.5 Q26 225.6 25.8 228.5 Q25.5 231.3 21.9 231.1"/>
 <!-- revision doc -->
 <path d="M17.3 281.4 H13.3 Q11.8 281.4 11.8 279.9 V267.2 Q11.8 265.7 13.3 265.7 H19.4 L23.4 269.6 V272.6"/>
 <path d="M18.1 268.2 V271 H21.2"/>
 <circle cx="22.5" cy="278.4" r="3.3"/>
 <path d="M22.4 276.8 V278.6 L23.6 279.7" stroke-width="1.1"/>
 <!-- config -->
 <circle cx="18.1" cy="309.6" r="1.4" fill="#1e1e1e"/>
 <path d="M18.1 309.6 V321.2"/>
 <path d="M12.7 321.2 V316.4 Q12.7 315.1 14 315.1 H22.2 Q23.5 315.1 23.5 316.4 V321.2"/>
 <circle cx="12.7" cy="321.3" r="1.3" fill="#1e1e1e"/>
 <circle cx="18.1" cy="321.3" r="1.3" fill="#1e1e1e"/>
 <circle cx="23.5" cy="321.3" r="1.3" fill="#1e1e1e"/>
 <!-- reports -->
 <path d="M9.5 350.6 Q9.5 349 14.6 349 Q19.7 349 19.7 350.6 V356.5"/>
 <path d="M9.5 350.6 V360.3 Q9.5 361.9 14.6 361.9 H16.4"/>
 <path d="M9.8 352.4 Q14.6 353.8 19.5 352.4"/>
 <path d="M9.8 355.5 Q14.6 356.9 19 355.6"/>
 <path d="M9.8 358.6 Q14.6 360 17 359"/>
 <path d="M19.6 365.2 H25.6 M19.9 365 V361 M22.7 365 V358.4 M25.3 365 V360.2" stroke-width="1.5"/>
 <!-- spc -->
 <path d="M9.5 392.5 V404.3 H25.7"/>
 <path d="M11.9 401.5 L16.1 397.4 L19.3 400.5 L24.8 394.8"/>
 <path d="M21.3 393.9 H25 V397.6"/>
 <!-- scheduler clipboard -->
 <path d="M15.7 448.3 H13.4 Q11.8 448.3 11.8 446.8 V434.8 Q11.8 433.3 13.3 433.3 H15.2 M20.5 433.3 H22 Q23.5 433.3 23.5 434.8 V438.9"/>
 <path d="M15.2 435.1 H20.5 V433.6 L17.9 432.1 L15.2 433.6 Z"/>
 <circle cx="22.5" cy="444.9" r="3.3"/>
 <path d="M22.4 443.2 V445 L23.6 446.1" stroke-width="1.1"/>
</g>
</svg>
</body></html>
